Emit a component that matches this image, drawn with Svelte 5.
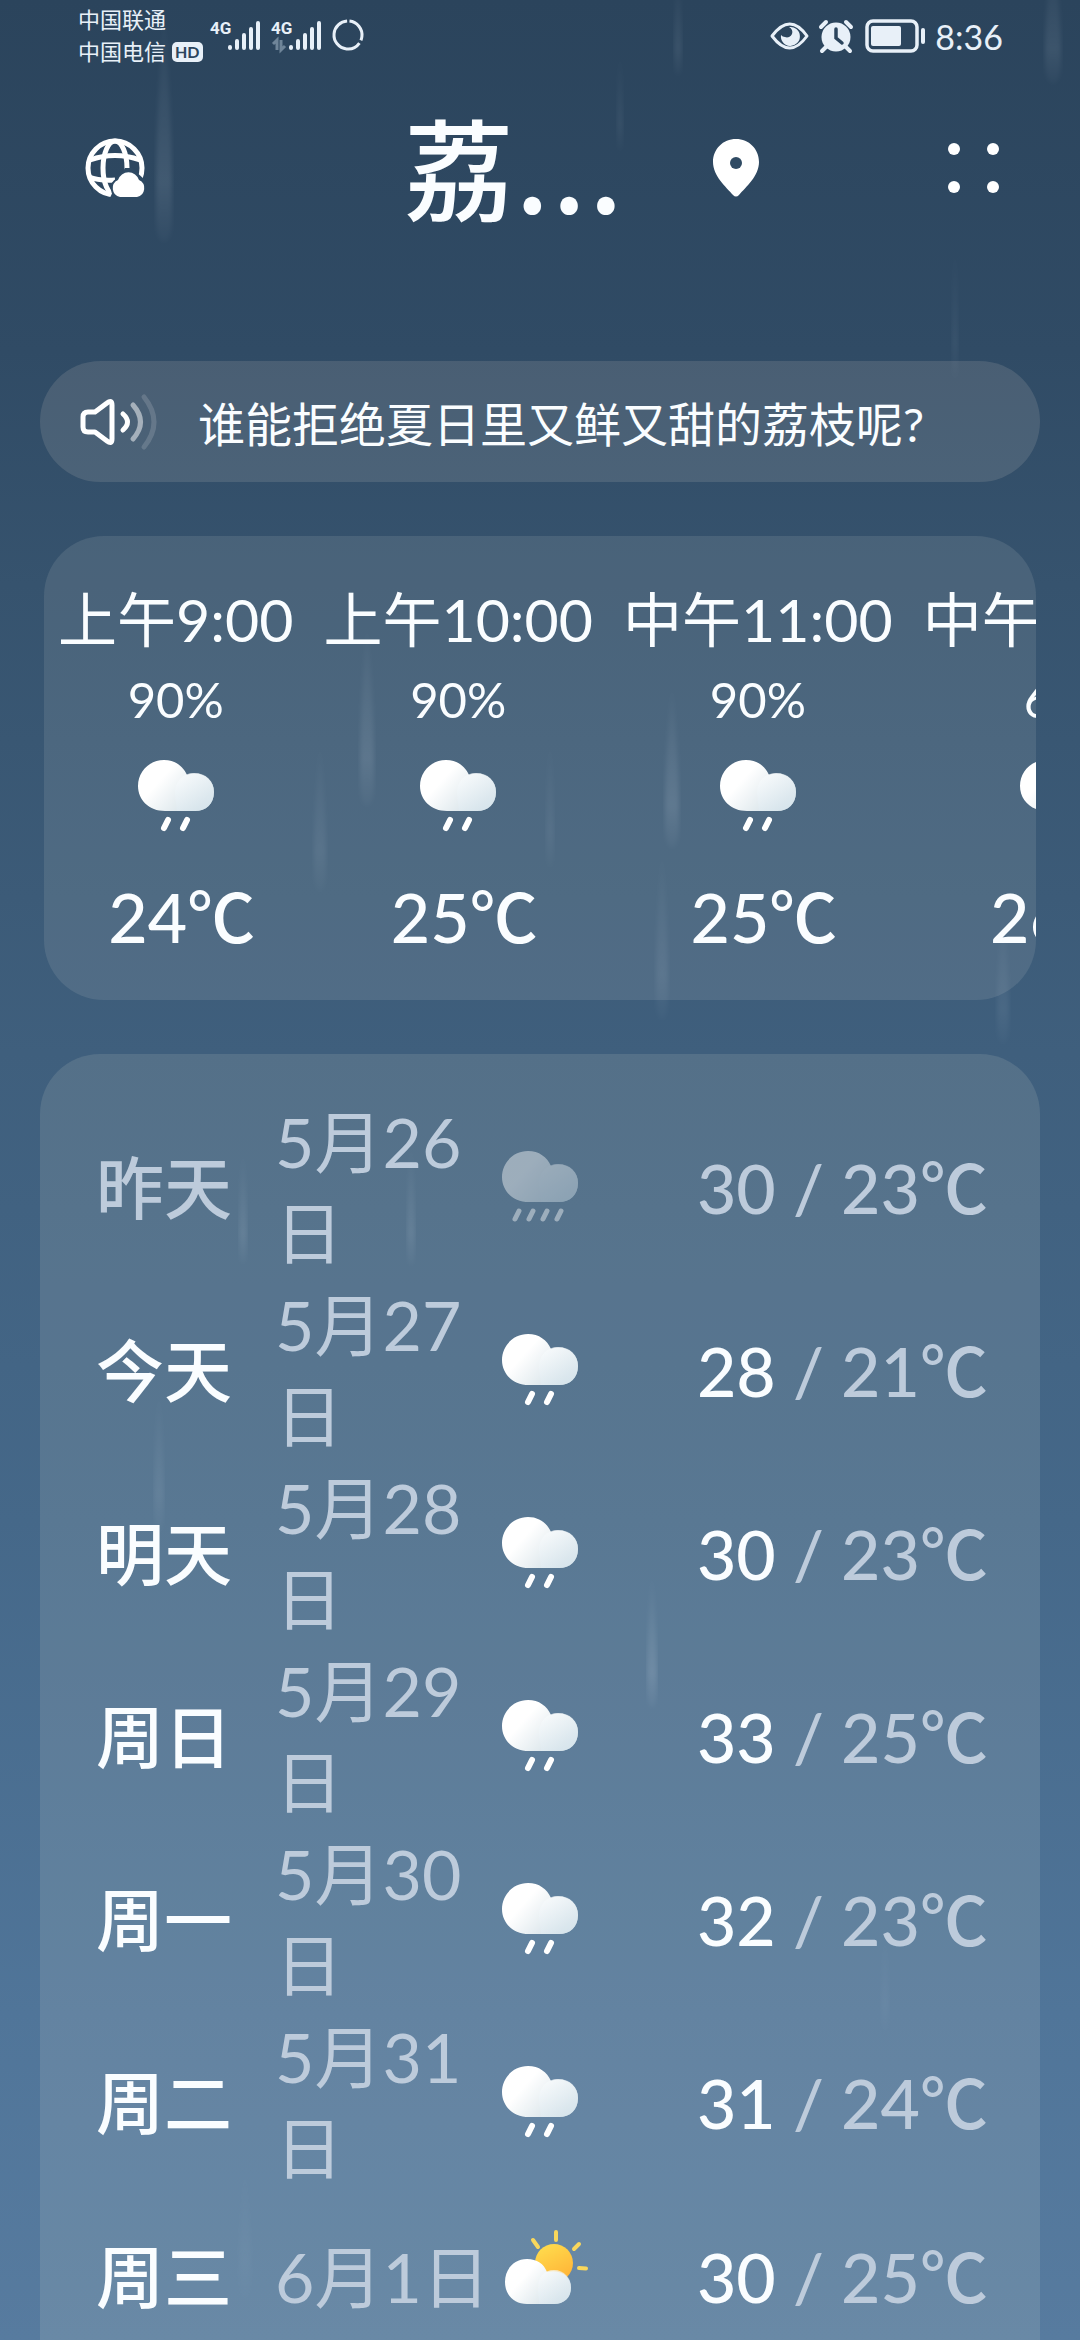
<script>
  const hours = [
    { time: '上午9:00', rain: '90%', temp: '24' },
    { time: '上午10:00', rain: '90%', temp: '25' },
    { time: '中午11:00', rain: '90%', temp: '25' },
    { time: '中午12:00', rain: '6%', temp: '26' }
  ];
  const days = [
    { day: '昨天', date: '5月26日', icon: 'heavy', high: 30, low: 23, past: true },
    { day: '今天', date: '5月27日', icon: 'rain', high: 28, low: 21 },
    { day: '明天', date: '5月28日', icon: 'rain', high: 30, low: 23 },
    { day: '周日', date: '5月29日', icon: 'rain', high: 33, low: 25 },
    { day: '周一', date: '5月30日', icon: 'rain', high: 32, low: 23 },
    { day: '周二', date: '5月31日', icon: 'rain', high: 31, low: 24 },
    { day: '周三', date: '6月1日', icon: 'sun', high: 30, low: 25 }
  ];
  // x, bottom y, length, half width, strength
  const drops = [
    [164, 242, 240, 8, 0.11], [620, 152, 110, 3, 0.06], [678, 76, 110, 4, 0.08], [1053, 84, 140, 8, 0.09],
    [955, 380, 150, 3, 0.05], [367, 806, 190, 7, 0.11], [550, 868, 140, 4, 0.06], [320, 892, 160, 6, 0.07],
    [672, 848, 170, 7, 0.12], [662, 1020, 180, 6, 0.08], [1003, 1044, 140, 6, 0.07], [243, 1264, 120, 4, 0.1],
    [411, 1266, 130, 4, 0.1], [159, 1532, 150, 5, 0.08], [652, 1708, 140, 5, 0.14], [885, 2032, 110, 4, 0.04],
    [245, 2300, 150, 6, 0.03]
  ];
</script>

{#snippet weather(kind)}
  <svg class="weather" viewBox="0 0 76 72" aria-hidden="true">
    <defs>
      <linearGradient id="cloudBig" x1="0" y1="0.2" x2="1" y2="0.8">
        <stop offset="0.3" stop-color="#fff" /><stop offset="0.9" stop-color="#d3e0e6" />
      </linearGradient>
      <linearGradient id="cloudSmall" x1="0.2" y1="0" x2="0.7" y2="1">
        <stop offset="0" stop-color="#fafcfd" /><stop offset="1" stop-color="#d8e6ee" />
      </linearGradient>
      <linearGradient id="sunFill" x1="0" y1="0" x2="0.5" y2="1">
        <stop offset="0" stop-color="#ffe04f" /><stop offset="1" stop-color="#ffb638" />
      </linearGradient>
    </defs>
    {#if kind === 'sun'}
      <circle cx="52" cy="22" r="19" fill="url(#sunFill)" />
      <path d="M31 -1l5 7M54 -9v8M77 3l-5 5M77 27l7 .4" stroke="#f9d75c" stroke-width="4" stroke-linecap="round" />
      <path d="M25 18c10 0 17 5 20 13c13 -3 24 4 24 16c0 10 -7 16 -17 16H25C12 63 3 54 3 41S12 18 25 18Z" fill="url(#cloudBig)" />
      <path d="M36 47c0 -11 6 -18 16 -18c10 0 17 8 17 17c0 10 -7 17 -17 17H37Z" fill="url(#cloudSmall)" opacity=".7" />
    {:else}
      <path d="M26 0c11 0 19 6 23 15c14 -5 27 4 27 17c0 12 -8 19 -19 19H27C11 51 0 40 0 26S11 0 26 0Z" fill="url(#cloudBig)" />
      <path d="M37 33c0 -12 8 -20 19 -20c12 0 20 8 20 19c0 12 -8 19 -19 19H39Z" fill="url(#cloudSmall)" opacity=".7" />
      {#if kind === 'heavy'}
        <path d="M17 60l-4 8M31 60l-4 8M45 60l-4 8M59 60l-4 8" stroke="#fff" stroke-width="5" stroke-linecap="round" />
      {:else}
        <path d="M30 60l-4 8M49 60l-4 8" stroke="#fff" stroke-width="6" stroke-linecap="round" />
      {/if}
    {/if}
  </svg>
{/snippet}

<div class="app">
  <svg class="drops" width="1080" height="2340" viewBox="0 0 1080 2340" aria-hidden="true">
    <defs>
      <linearGradient id="drop" x1="0" y1="0" x2="0" y2="1">
        <stop offset="0" stop-color="#dfeaf5" stop-opacity="0" />
        <stop offset="0.75" stop-color="#dfeaf5" />
        <stop offset="1" stop-color="#dfeaf5" stop-opacity="0.2" />
      </linearGradient>
      <filter id="soft"><feGaussianBlur stdDeviation="2" /></filter>
    </defs>
    {#each drops as [x, y, len, r, o]}
      <path
        d={`M${x} ${y - len}C${x + r} ${y - len / 2} ${x + r} ${y - len / 3} ${x + r} ${y - 25}Q${x + r} ${y} ${x} ${y}Q${x - r} ${y} ${x - r} ${y - 25}C${x - r} ${y - len / 3} ${x - r} ${y - len / 2} ${x} ${y - len}Z`}
        fill="url(#drop)" opacity={o} filter="url(#soft)" />
    {/each}
  </svg>

  <div class="status">
    <div class="carriers">
      <span>中国联通</span>
      <span>中国电信<b class="hd">HD</b></span>
    </div>
    <svg class="signals" width="158" height="36" viewBox="0 0 158 36" aria-hidden="true">
      <g stroke="#e8f0f8" stroke-width="4" stroke-linecap="round">
        <path d="M20 29v1M27 23v7M34 17v13M41 11v19M48 5v25" />
        <path d="M81 29v1M88 23v7M95 17v13M102 11v19M109 5v25" />
      </g>
      <g fill="#e8f0f8" class="net"><text x="0" y="16">4G</text><text x="61" y="16">4G</text></g>
      <path d="M63 26l4 -4v10M71 22v10l4 -4" fill="none" stroke="#6f8599" stroke-width="3" />
      <circle cx="138" cy="17" r="14" fill="none" stroke="#e8f0f8" stroke-width="3" stroke-dasharray="26 3 56 3" transform="rotate(-84 138 17)" />
    </svg>
    <svg class="system" width="156" height="36" viewBox="0 0 156 36" aria-hidden="true">
      <path d="M2 18Q20 -6 37 18Q20 42 2 18Z" fill="none" stroke="#e8f0f8" stroke-width="3" stroke-linejoin="round" />
      <path d="M19 9a9.500 9.500 0 1 1 -8 8a5 5 0 0 0 4 2a5 5 0 0 0 4 -10Z" fill="#e8f0f8" />
      <circle cx="66" cy="19" r="14.500" fill="#e8f0f8" />
      <path d="M51 9l5 -5M76 4l5 5M56 29l-4 4M76 29l4 4" stroke="#e8f0f8" stroke-width="4" stroke-linecap="round" />
      <path d="M66 11v9l6 5" fill="none" stroke="#2c455d" stroke-width="3.500" stroke-linecap="round" />
      <rect x="97" y="3" width="50" height="30" rx="6" fill="none" stroke="#e8f0f8" stroke-width="3.500" />
      <rect x="101" y="8" width="30" height="20" rx="2" fill="#e8f0f8" />
      <path d="M153 12v12" stroke="#e8f0f8" stroke-width="4" stroke-linecap="round" />
    </svg>
    <span class="clock">8:36</span>
  </div>

  <header>
    <button class="globe" aria-label="城市管理">
      <svg width="60" height="60" viewBox="0 0 60 60" aria-hidden="true">
        <g fill="none" stroke="#fff" stroke-width="5">
          <circle cx="30" cy="30" r="27" />
          <ellipse cx="30" cy="30" rx="12" ry="27" />
          <path d="M5 22Q30 13 55 22M4 39Q14 43 30 42" />
        </g>
        <path d="M35 38L40 30L47 30L60 42V62H24Z" fill="#2f4a63" />
        <path d="M35 59a9 9 0 0 1 -2 -17a11 11 0 0 1 21 0a9 9 0 0 1 -2 17Z" fill="#fff" stroke="#2f4a63" stroke-width="4" paint-order="stroke" />
      </svg>
    </button>
    <h1>荔<span>...</span></h1>
    <svg class="pin" width="48" height="58" viewBox="0 0 48 58" aria-hidden="true">
      <path d="M24 0C37 0 47 10 47 23C47 37 34 48 27 56Q24 59 21 56C14 48 1 37 1 23C1 10 11 0 24 0Z" fill="#fff" />
      <circle cx="24" cy="24" r="6" fill="#2f4a63" />
    </svg>
    <button class="more" aria-label="更多">
      <svg width="52" height="52" viewBox="0 0 52 52" aria-hidden="true">
        <g fill="#fff"><circle cx="6" cy="7" r="6" /><circle cx="45" cy="7" r="6" /><circle cx="6" cy="45" r="6" /><circle cx="45" cy="45" r="6" /></g>
      </svg>
    </button>
  </header>

  <button class="notice">
    <svg width="76" height="56" viewBox="0 0 76 56" fill="none" stroke-linecap="round" aria-hidden="true">
      <path d="M3 23Q3 18 8 18H15L27 9Q32 5 32 11V45Q32 51 27 47L15 38H8Q3 38 3 33Z" stroke="#fff" stroke-width="5" stroke-linejoin="round" />
      <path d="M43 20q9 8 0 16" stroke="#fff" stroke-width="5" />
      <path d="M53 11q15 17 0 34" stroke="#fff" stroke-opacity=".5" stroke-width="5" />
      <path d="M64 3q20 25 0 50" stroke="#fff" stroke-opacity=".15" stroke-width="5" />
    </svg>
    <span>谁能拒绝夏日里又鲜又甜的荔枝呢?</span>
  </button>

  <section class="hourly" aria-label="逐小时预报">
    {#each hours as h}
      <div class="hour">
        <span class="time">{h.time}</span>
        <span class="rain">{h.rain}</span>
        {@render weather('rain')}
        <span class="temp">{h.temp}℃</span>
      </div>
    {/each}
  </section>

  <section class="daily" aria-label="每日预报">
    {#each days as d}
      <div class="row" class:past={d.past}>
        <span class="day">{d.day}</span>
        <span class="date">{d.date}</span>
        {@render weather(d.icon)}
        <span class="range"><strong>{d.high}</strong> / {d.low}℃</span>
      </div>
    {/each}
  </section>
</div>

<style>
  :global(body) { margin: 0; }
  .app {
    position: relative;
    height: 100vh;
    overflow: hidden;
    display: flex;
    flex-direction: column;
    box-sizing: border-box;
    color: #fafdff;
    font-family: Lato, "Noto Sans CJK SC", sans-serif;
    background: linear-gradient(#2b445c 0%, #304b65 15%, #36536e 25%, #3f5f7d 45%, #456889 65%, #507599 86%, #577b9f 100%);
  }
  .app > * { flex-shrink: 0; }
  .drops { position: absolute; left: 0; top: 0; }
  button { border: 0; padding: 0; background: none; color: inherit; font: inherit; display: flex; }
  svg { display: block; overflow: visible; flex: none; }

  .status { display: flex; align-items: center; height: 72px; padding: 0 77px 0 78px; color: #e8f0f8; }
  .carriers { display: flex; flex-direction: column; font-size: 22px; line-height: 32px; width: 132px; }
  .carriers span { display: flex; align-items: center; }
  .hd { margin-left: 6px; padding: 0 3px; border-radius: 5px; background: #e8f0f8; color: #2c455d; font-size: 16px; line-height: 20px; }
  .net { font-family: Roboto, sans-serif; font-size: 17px; font-weight: 700; }
  .system { margin-left: auto; }
  .clock { font-size: 34px; margin-left: 9px; }

  header { display: flex; align-items: center; height: 192px; padding: 0 80px 0 85px; }
  h1 { margin: 0 0 0 259px; padding-top: 4px; width: 308px; font-size: 110px; line-height: 130px; font-weight: 500; white-space: nowrap; }
  h1 span { font-family: "Noto Sans CJK SC", sans-serif; font-size: 132px; line-height: 100px; font-weight: 400; }
  .more { margin-left: auto; }

  .notice { align-items: center; gap: 42px; margin: 97px 40px 0; height: 121px; padding: 0 40px; border-radius: 61px; background: rgba(255, 235, 225, 0.12); font-size: 47px; text-align: left; }

  .hourly { display: flex; gap: 30px; margin: 54px 44px 0; padding: 40px 14px 30px; height: 394px; border-radius: 60px; background: rgba(240, 240, 230, 0.11); overflow-x: auto; overflow-y: hidden; scrollbar-width: none; }
  .hour { flex: none; display: flex; flex-direction: column; align-items: center; }
  .time { font-size: 59px; line-height: 88px; }
  .rain { font-size: 49px; line-height: 70px; margin-bottom: 26px; }
  .temp { font-size: 68px; line-height: 90px; font-weight: 500; margin-top: 40px; padding-left: 12px; }
  .weather { width: 76px; height: 72px; }

  .daily { display: flex; flex-direction: column; gap: 1px; margin: 54px 40px 0; padding: 42px 52px 0 56px; height: 1400px; border-radius: 60px; background: rgba(240, 240, 220, 0.12); }
  .row { display: flex; align-items: center; font-size: 68px; line-height: 91px; min-height: 165px; }
  .day { width: 179px; font-weight: 500; }
  .date { width: 227px; }
  .date, .range { color: #bdcbdb; }
  .range { margin-left: auto; font-weight: 500; white-space: pre; }
  .range strong { font-weight: 500; color: #fafdff; }
  .past .day, .past strong { color: #bdcbdb; }
  .past .weather { opacity: 0.42; }
</style>
